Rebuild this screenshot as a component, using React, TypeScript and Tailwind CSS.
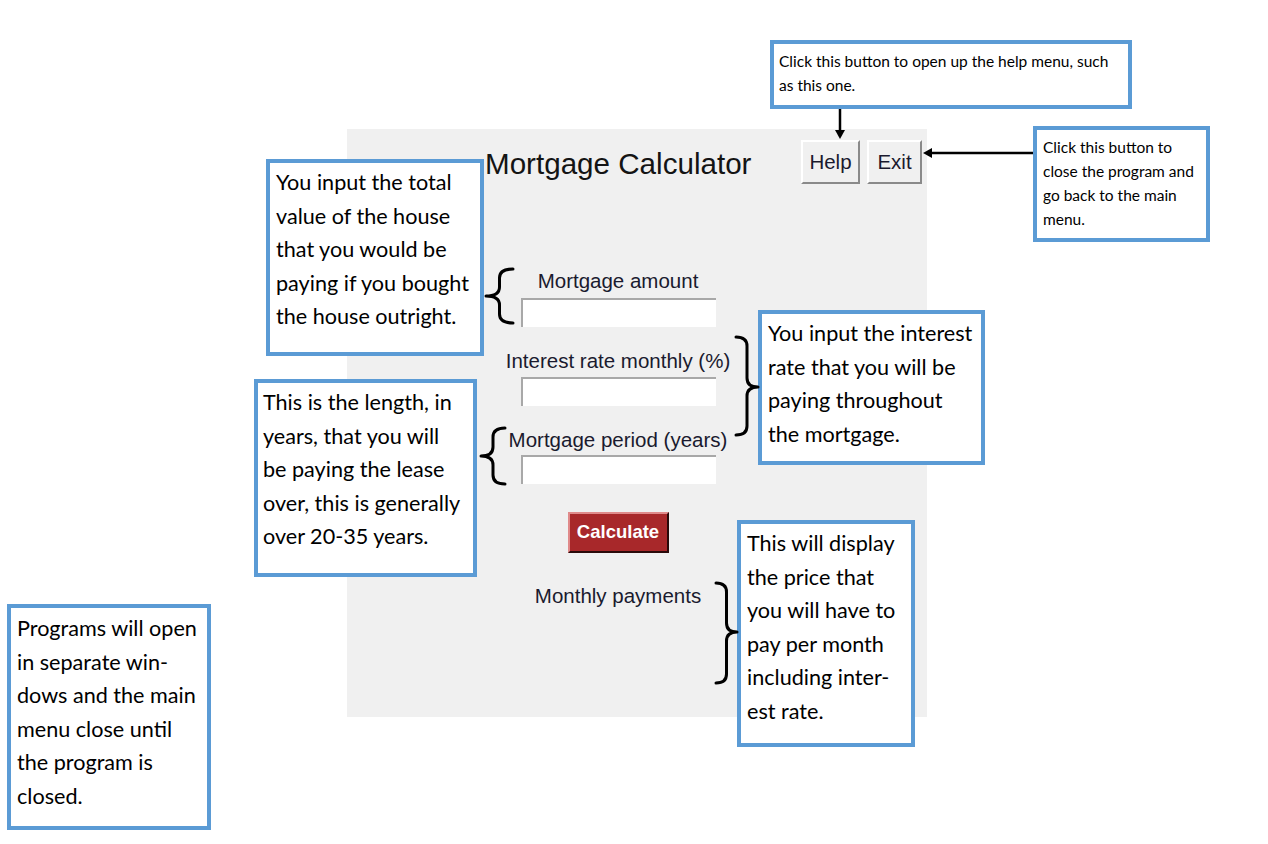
import React from "react";

function brace(xl: number, xr: number, yt: number, yb: number, ym: number, left: boolean, r = 9) {
  const xm = (xl + xr) / 2;
  const outer = left ? xr : xl;
  const tip = left ? xl : xr;
  return `M${outer},${yt} Q${xm},${yt} ${xm},${yt + r} L${xm},${ym - r} Q${xm},${ym} ${tip},${ym} Q${xm},${ym} ${xm},${ym + r} L${xm},${yb - r} Q${xm},${yb} ${outer},${yb}`;
}

function Lines({ lines }: { lines: string[] }) {
  return (
    <>
      {lines.map((l, i) => (
        <div key={i} className="whitespace-nowrap">
          {l}
        </div>
      ))}
    </>
  );
}

export default function App() {
  return (
    <div className="relative w-[1268px] h-[844px] bg-white overflow-hidden">
      {/* Program window */}
      <div className="absolute left-[347px] top-[129px] w-[580px] h-[588px] bg-[#f0f0f0] flex flex-col font-['Liberation_Sans',Arial,sans-serif] text-[#1a1a2e]">
        <div className="flex items-start pt-[11px] pr-[5px]">
          <div className="ml-[138px] mt-[8.5px] text-[29.6px] leading-none text-[#141414]">Mortgage Calculator</div>
          <div className="ml-auto flex gap-[7px]">
            <button className="w-[59px] h-[44px] flex items-center justify-center bg-[#f0f0f0] border-2 border-t-white border-l-white border-b-[#8a8a8a] border-r-[#8a8a8a] text-[20.5px] leading-none text-[#1a1a2e]">
              Help
            </button>
            <button className="w-[55px] h-[44px] flex items-center justify-center bg-[#f0f0f0] border-2 border-t-white border-l-white border-b-[#8a8a8a] border-r-[#8a8a8a] text-[20.5px] leading-none text-[#1a1a2e]">
              Exit
            </button>
          </div>
        </div>
        <div className="ml-[121px] w-[300px] flex flex-col items-center">
          <div className="mt-[86.5px] text-[20.5px] leading-none whitespace-nowrap">Mortgage amount</div>
          <div className="mt-[7px] w-[195px] h-[29px] bg-white border-t-2 border-l-2 border-t-[#a8a8a8] border-l-[#a8a8a8]" />
          <div className="mt-[23.5px] text-[20.5px] leading-none whitespace-nowrap">Interest rate monthly (%)</div>
          <div className="mt-[6px] w-[195px] h-[29px] bg-white border-t-2 border-l-2 border-t-[#a8a8a8] border-l-[#a8a8a8]" />
          <div className="mt-[23.5px] text-[20.5px] leading-none whitespace-nowrap">Mortgage period (years)</div>
          <div className="mt-[5px] w-[195px] h-[29px] bg-white border-t-2 border-l-2 border-t-[#a8a8a8] border-l-[#a8a8a8]" />
          <button className="mt-[28px] w-[101px] h-[41px] flex items-center justify-center bg-[#a8282a] border-2 border-t-[#e08a8a] border-l-[#e08a8a] border-b-[#2a0a0a] border-r-[#2a0a0a] text-white font-bold text-[18.5px] leading-none">
            Calculate
          </button>
          <div className="mt-[32.5px] text-[20.5px] leading-none whitespace-nowrap">Monthly payments</div>
        </div>
      </div>

      {/* Annotation boxes */}
      <div className="absolute left-[770px] top-[40px] w-[362px] h-[69px] bg-white border-4 border-[#5b9bd5] pl-[5px] pt-[5px] font-['Lato','Open_Sans',sans-serif] text-[15.5px] leading-[24px] text-black">
        <Lines lines={["Click this button to open up the help menu, such", "as this one."]} />
      </div>
      <div className="absolute left-[1033px] top-[126px] w-[177px] h-[116px] bg-white border-4 border-[#5b9bd5] pl-[6px] pt-[5px] font-['Lato','Open_Sans',sans-serif] text-[15.5px] leading-[24px] text-black">
        <Lines lines={["Click this button to", "close the program and", "go back to the main", "menu."]} />
      </div>
      <div className="absolute left-[266px] top-[159px] w-[218px] h-[197px] bg-white border-4 border-[#5b9bd5] pl-[6px] pt-[3px] font-['Lato','Open_Sans',sans-serif] text-[21.6px] leading-[33.5px] text-black">
        <Lines lines={["You input the total", "value of the house", "that you would be", "paying if you bought", "the house outright."]} />
      </div>
      <div className="absolute left-[254px] top-[379px] w-[223px] h-[198px] bg-white border-4 border-[#5b9bd5] pl-[5px] pt-[3px] font-['Lato','Open_Sans',sans-serif] text-[21.6px] leading-[33.5px] text-black">
        <Lines lines={["This is the length, in", "years, that you will", "be paying the lease", "over, this is generally", "over 20-35 years."]} />
      </div>
      <div className="absolute left-[758px] top-[310px] w-[227px] h-[155px] bg-white border-4 border-[#5b9bd5] pl-[6px] pt-[3px] font-['Lato','Open_Sans',sans-serif] text-[21.6px] leading-[33.5px] text-black">
        <Lines lines={["You input the interest", "rate that you will be", "paying throughout", "the mortgage."]} />
      </div>
      <div className="absolute left-[737px] top-[520px] w-[178px] h-[227px] bg-white border-4 border-[#5b9bd5] pl-[6px] pt-[3px] font-['Lato','Open_Sans',sans-serif] text-[21.6px] leading-[33.5px] text-black">
        <Lines lines={["This will display", "the price that", "you will have to", "pay per month", "including inter-", "est rate."]} />
      </div>
      <div className="absolute left-[7px] top-[604px] w-[204px] h-[226px] bg-white border-4 border-[#5b9bd5] pl-[6px] pt-[4px] font-['Lato','Open_Sans',sans-serif] text-[21.6px] leading-[33.5px] text-black">
        <Lines lines={["Programs will open", "in separate win-", "dows and the main", "menu close until", "the program is", "closed."]} />
      </div>

      {/* Braces and arrows */}
      <svg className="absolute left-0 top-0 pointer-events-none" width="1268" height="844" viewBox="0 0 1268 844">
        <g fill="none" stroke="#000" strokeWidth="3" strokeLinecap="round" strokeLinejoin="round">
          <path d={brace(486, 513, 269, 323, 296, true)} />
          <path d={brace(481, 505, 428, 484, 456, true)} />
          <path d={brace(736, 758, 337, 435, 387, false)} />
          <path d={brace(716, 737, 583, 683, 632, false)} />
        </g>
        <g stroke="#000" strokeWidth="2.5">
          <line x1="840" y1="109" x2="840" y2="131" />
          <line x1="1033" y1="153" x2="931" y2="153" />
        </g>
        <polygon points="835,130 845,130 840,139" fill="#000" />
        <polygon points="932,148 932,158 923,153" fill="#000" />
      </svg>
    </div>
  );
}
